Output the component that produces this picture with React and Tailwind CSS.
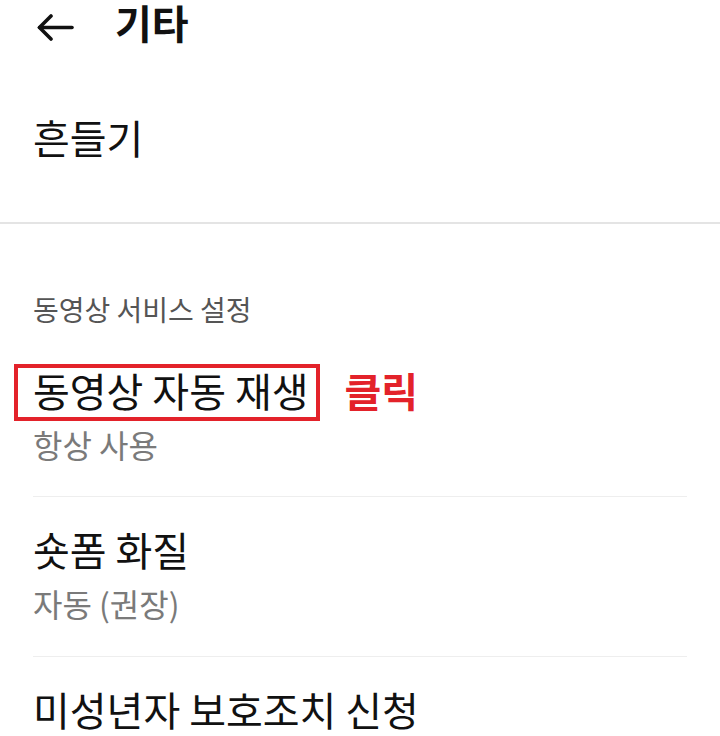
import React from "react";

const font = { fontFamily: '"Noto Sans CJK KR", "Noto Sans", sans-serif' };

function SettingItem({ title, sub, marked, top = "pt-[29px]" }) {
  return (
    <div className={`px-[33px] ${top}`}>
      <div className="flex items-center">
        <span className="relative text-[40px] leading-[48px] text-[#111111]">
          {title}
          {marked && (
            <span className="absolute -left-[19px] -right-[11px] -top-[2px] -bottom-[7px] border-[4px] border-[#e3222a]" />
          )}
        </span>
        {marked && (
          <span className="ml-[36px] text-[40px] leading-[48px] font-bold text-[#e3222a]">
            클릭
          </span>
        )}
      </div>
      {sub && (
        <div className="mt-[10px] text-[32px] leading-[40px] text-[#7a7a7a]">
          {sub}
        </div>
      )}
    </div>
  );
}

export default function App() {
  return (
    <div className="w-[720px] h-[736px] overflow-hidden bg-white" style={font}>
      {/* 상단 바 */}
      <div className="h-[46px] flex items-start">
        <svg
          className="ml-[37px] mt-[14px]"
          width="37"
          height="27"
          viewBox="0 0 37 27"
          fill="none"
          stroke="#111"
          strokeWidth="3.6"
          strokeLinecap="round"
          strokeLinejoin="round"
        >
          <path d="M35 13.5H2.5" />
          <path d="M14 2L2.5 13.5L14 25" />
        </svg>
        <span className="ml-[41px] text-[40px] leading-[44px] font-bold text-[#111111]">
          기타
        </span>
      </div>

      <div className="px-[33px] pt-[67px] pb-[61px] text-[40px] leading-[48px] text-[#111111]">
        흔들기
      </div>
      <div className="h-[2px] bg-[#e4e4e4]" />

      <div className="px-[33px] mt-[67px] text-[28px] leading-[36px] text-[#555555]">
        동영상 서비스 설정
      </div>

      <div className="mt-[10px]">
        <SettingItem title="동영상 자동 재생" sub="항상 사용" marked />
      </div>
      <div className="mx-[33px] mt-[32px] h-[1px] bg-[#eeeeee]" />

      <SettingItem title="숏폼 화질" sub="자동 (권장)" top="pt-[28px]" />
      <div className="mx-[33px] mt-[33px] h-[1px] bg-[#eeeeee]" />

      <SettingItem title="미성년자 보호조치 신청" top="pt-[28px]" />
    </div>
  );
}
